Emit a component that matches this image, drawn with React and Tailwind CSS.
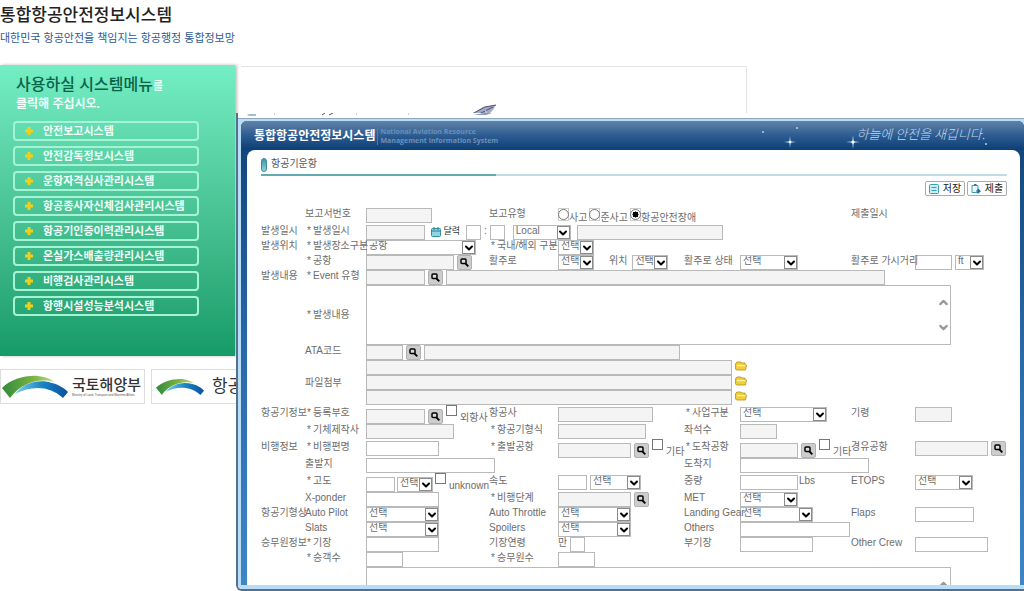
import React, { useState } from "react";
import { ChevronDown, ChevronUp } from "lucide-react";

const menus = [
  "안전보고시스템",
  "안전감독정보시스템",
  "운항자격심사관리시스템",
  "항공종사자신체검사관리시스템",
  "항공기인증이력관리시스템",
  "온실가스배출량관리시스템",
  "비행검사관리시스템",
  "항행시설성능분석시스템",
];

function Swoosh({ id, className }) {
  return (
    <svg viewBox="0 0 66 24" className={className} aria-hidden="true">
      <defs>
        <linearGradient id={id + "g"} x1="0" x2="1">
          <stop offset="0" stopColor="#2f8a3c" />
          <stop offset="0.6" stopColor="#7cb342" />
          <stop offset="1" stopColor="#b9d98a" />
        </linearGradient>
        <linearGradient id={id + "b"} x1="0" x2="1">
          <stop offset="0" stopColor="#7fd3ee" />
          <stop offset="0.5" stopColor="#1a86c4" />
          <stop offset="1" stopColor="#0b4f9e" />
        </linearGradient>
      </defs>
      <path d="M0 13 C9 4 24 0 36 1 C44 2 49 4 52 7 C38 3 20 7 8 23 Z" fill={`url(#${id}g)`} />
      <path d="M13 19 C22 7 38 4 50 8 C58 10 63 14 66 17 L61 23 C48 11 30 10 13 19 Z" fill={`url(#${id}b)`} />
    </svg>
  );
}

function Star({ className }) {
  return (
    <svg viewBox="0 0 14 14" className={className} aria-hidden="true">
      <path d="M7 0 L7.8 6.2 L14 7 L7.8 7.8 L7 14 L6.2 7.8 L0 7 L6.2 6.2 Z" fill="#a9d4f5" />
      <circle cx="7" cy="7" r="1.6" fill="#fff" />
    </svg>
  );
}

function FolderIcon() {
  return (
    <svg viewBox="0 0 12 10" className="h-2.5 w-3" aria-hidden="true">
      <path d="M1 2 L2 1 H6 L7 2 H10 V4 H11.5 L10.5 9 H1.5 L0.5 8 V3 Z" fill="#f2cf3a" stroke="#b8901a" strokeWidth="0.8" />
      <path d="M2 4.6 H10.5" stroke="#fff6b0" strokeWidth="1.2" />
    </svg>
  );
}

function Row({ tall, children }) {
  return (
    <div
      className={
        "grid grid-cols-[44fr_61fr_123fr_69fr_126fr_56fr_111fr_64fr_92fr] " +
        (tall ? "h-[17px]" : "h-[15px]")
      }
    >
      {children}
    </div>
  );
}

function Group({ children }) {
  return <div className="col-start-1 min-w-0 leading-3 whitespace-nowrap">{children}</div>;
}

function Label({ id, req, className = "", children }) {
  return (
    <label htmlFor={id} className={"relative z-10 flex min-w-0 leading-3 whitespace-nowrap " + className}>
      {req && <span className="w-2 shrink-0 text-center">*</span>}
      {children}
    </label>
  );
}

function Cell({ gap = "gap-[3px]", className = "", children }) {
  return <div className={"flex min-w-0 " + gap + " " + className}>{children}</div>;
}

function Field({ id, label, off, className = "" }) {
  return (
    <input
      id={id}
      aria-label={label}
      type="text"
      readOnly={off}
      className={
        "h-[15px] shrink-0 border border-[#b9b9b9] px-1 outline-none " +
        (off ? "bg-[#f4f4f4] " : "bg-white ") +
        className
      }
    />
  );
}

function Select({ id, label, value = "선택", className = "" }) {
  return (
    <span className={"relative flex h-[15px] shrink-0 border border-[#b9b9b9] bg-white " + className}>
      <select
        id={id}
        aria-label={label}
        className="h-2.5 w-full appearance-none bg-transparent pl-0.5 leading-[10px] outline-none"
      >
        <option>{value}</option>
      </select>
      <span className="pointer-events-none absolute inset-y-0 right-0 flex w-[13px] items-center justify-center border border-[#8a8a8a] bg-white">
        <ChevronDown size={12} strokeWidth={4} className="shrink-0 text-black" />
      </span>
    </span>
  );
}

function SearchButton({ label }) {
  return (
    <button
      type="button"
      aria-label={label}
      className="flex h-[15px] w-[15px] shrink-0 items-center justify-center rounded-xs border border-[#b0b0b0] bg-[#cdcdcd]"
    >
      <svg viewBox="0 0 9 9" className="h-[9px] w-[9px]" aria-hidden="true">
        <rect x="1" y="1" width="5" height="4.5" rx="1" fill="#ddd" stroke="#000" strokeWidth="1.5" />
        <path d="M5.5 5.5 L8.3 8.3" stroke="#000" strokeWidth="1.8" />
      </svg>
    </button>
  );
}

function Check({ children }) {
  return (
    <label className="flex shrink-0 items-end gap-[3px] self-stretch leading-3">
      <input type="checkbox" className="-mt-0.5 h-[11px] w-[11px] appearance-none self-start border border-[#777] bg-white checked:bg-gray-500" />
      {children}
    </label>
  );
}

function Radio({ value, current, onChange }) {
  return (
    <label className="flex items-end leading-3">
      <span className="flex h-[13px] w-[11px] items-center justify-center self-start border border-[#ccc]">
        <input
          type="radio"
          name="reportType"
          value={value}
          checked={current === value}
          onChange={() => onChange(value)}
          className="h-[11px] w-[11px] shrink-0 appearance-none rounded-full border border-[#777] bg-white checked:bg-[radial-gradient(circle,#000_45%,transparent_50%)]"
        />
      </span>
      {value}
    </label>
  );
}

function ReportForm() {
  const [type, setType] = useState("항공안전장애");

  return (
    <form className="mt-3 text-[10px] text-[#6c6c6c]">
      <Row tall>
        <Label id="reportNo" className="col-start-2">보고서번호</Label>
        <Cell><Field id="reportNo" off className="w-[66px]" /></Cell>
        <div className="leading-3">보고유형</div>
        <Cell gap="gap-0.5" className="col-span-3 h-4">
          {["사고", "준사고", "항공안전장애"].map((t) => (
            <Radio key={t} value={t} current={type} onChange={setType} />
          ))}
        </Cell>
        <div className="col-start-8 leading-3">제출일시</div>
      </Row>
      <Row>
        <Group>발생일시</Group>
        <Label id="date" req>발생일시</Label>
        <Cell gap="gap-1.5" className="col-span-7">
          <Field id="date" off className="w-[59px]" />
          <button type="button" className="flex h-[13px] w-[29px] shrink-0 items-center justify-between text-[9px] whitespace-nowrap text-[#333]">
            <svg viewBox="0 0 10 10" className="h-2.5 w-2.5 shrink-0" aria-hidden="true">
              <rect x="0.5" y="1.5" width="9" height="8" rx="1" fill="#8fd6e0" stroke="#2f8ea0" />
              <path d="M1 4 H9 M3 0 V3 M7 0 V3" stroke="#2f7f92" />
            </svg>
            달력
          </button>
          <div className="flex gap-[3px] leading-3">
            <Field label="시" className="w-[15px]" />
            :
            <Field label="분" className="w-[15px]" />
          </div>
          <Select label="시간대" value="Local" className="ml-0.5 w-[58px]" />
          <Field label="표준시" off className="w-[146px]" />
        </Cell>
      </Row>
      <Row>
        <Group>발생위치</Group>
        <Label id="place" req>발생장소구분</Label>
        <Cell><Select id="place" value="공항" className="w-[110px]" /></Cell>
        <Label id="domestic" req>국내/해외 구분</Label>
        <Cell><Select id="domestic" className="w-9" /></Cell>
      </Row>
      <Row>
        <Label id="airport" req className="col-start-2">공항</Label>
        <Cell>
          <Field id="airport" off className="w-[88px]" />
          <SearchButton label="공항 검색" />
        </Cell>
        <Label id="runway">활주로</Label>
        <Cell>
          <Select id="runway" className="w-9" />
          <Label id="position" className="ml-3">위치</Label>
          <Select id="position" className="ml-0.5 w-9" />
        </Cell>
        <Label id="runwayState">활주로 상태</Label>
        <Cell><Select id="runwayState" className="w-[58px]" /></Cell>
        <Label id="visibility">활주로 가시거리</Label>
        <Cell>
          <Field id="visibility" className="w-[37px]" />
          <Select label="거리 단위" value="ft" className="w-[29px]" />
        </Cell>
      </Row>
      <Row>
        <Group>발생내용</Group>
        <Label id="event" req>Event 유형</Label>
        <Cell className="col-span-7">
          <Field id="event" off className="w-[59px]" />
          <SearchButton label="Event 검색" />
          <Field label="Event 유형명" off className="w-[439px]" />
        </Cell>
      </Row>
      <div className="grid grid-cols-[44fr_61fr_585fr_56fr]">
        <Label id="content" req className="col-start-2 self-center">발생내용</Label>
        <div className="flex border border-[#b9b9b9]">
          <textarea id="content" className="h-[58px] flex-1 resize-none p-1 outline-none" />
          <div className="flex flex-col justify-between py-2.5 text-[#999]">
            <ChevronUp size={13} strokeWidth={4} />
            <ChevronDown size={13} strokeWidth={4} />
          </div>
        </div>
      </div>
      <Row>
        <Label id="ata" className="col-start-2">ATA코드</Label>
        <Cell className="col-span-7">
          <Field id="ata" off className="w-[37px]" />
          <SearchButton label="ATA 검색" />
          <Field label="ATA 코드명" off className="w-[256px]" />
        </Cell>
      </Row>
      <div className="grid grid-cols-[44fr_61fr_641fr]">
        <Label id="file1" className="col-start-2 self-center">파일첨부</Label>
        <div>
          {[1, 2, 3].map((n) => (
            <div key={n} className="flex items-start gap-[3px]">
              <Field id={"file" + n} label={n > 1 ? "파일첨부 " + n : undefined} off className="w-[366px]" />
              <button type="button" aria-label="파일 찾기" className="pt-px"><FolderIcon /></button>
            </div>
          ))}
        </div>
      </div>

      <div className="mt-0.5">
        <Row tall>
          <Group>항공기정보</Group>
          <Label id="regNo" req>등록부호</Label>
          <Cell className="items-end">
            <Field id="regNo" off className="w-[59px]" />
            <SearchButton label="등록부호 검색" />
            <Check>외항사</Check>
          </Cell>
          <Label id="airline">항공사</Label>
          <Cell><Field id="airline" off className="w-[95px]" /></Cell>
          <Label id="business" req>사업구분</Label>
          <Cell><Select id="business" className="w-[87px]" /></Cell>
          <Label id="age">기령</Label>
          <Cell><Field id="age" off className="w-[37px]" /></Cell>
        </Row>
        <Row tall>
          <Label id="maker" req className="col-start-2">기체제작사</Label>
          <Cell><Field id="maker" off className="w-[88px]" /></Cell>
          <Label id="model" req>항공기형식</Label>
          <Cell><Field id="model" off className="w-[88px]" /></Cell>
          <Label id="seats">좌석수</Label>
          <Cell><Field id="seats" off className="w-[37px]" /></Cell>
        </Row>
        <Row tall>
          <Group>비행정보</Group>
          <Label id="flight" req>비행편명</Label>
          <Cell><Field id="flight" className="w-[73px]" /></Cell>
          <Label id="dep" req>출발공항</Label>
          <Cell className="items-end">
            <Field id="dep" off className="w-[73px]" />
            <SearchButton label="출발공항 검색" />
            <Check>기타</Check>
          </Cell>
          <Label id="arr" req>도착공항</Label>
          <Cell className="items-end">
            <Field id="arr" off className="w-[58px]" />
            <SearchButton label="도착공항 검색" />
            <Check>기타</Check>
          </Cell>
          <Label id="via">경유공항</Label>
          <Cell>
            <Field id="via" off className="w-[73px]" />
            <SearchButton label="경유공항 검색" />
          </Cell>
        </Row>
        <Row tall>
          <Label id="from" className="col-start-2">출발지</Label>
          <Cell className="col-span-3"><Field id="from" className="w-[129px]" /></Cell>
          <Label id="to">도착지</Label>
          <Cell className="col-span-3"><Field id="to" className="w-[129px]" /></Cell>
        </Row>
        <Row tall>
          <Label id="altitude" req className="col-start-2">고도</Label>
          <Cell gap="gap-0.5" className="items-end">
            <Field id="altitude" className="w-[29px]" />
            <Select label="고도 단위" className="w-9" />
            <Check>unknown</Check>
          </Cell>
          <Label id="speed">속도</Label>
          <Cell>
            <Field id="speed" className="w-[29px]" />
            <Select label="속도 단위" className="w-[51px]" />
          </Cell>
          <Label id="weight">중량</Label>
          <Cell gap="gap-px">
            <Field id="weight" className="w-[58px]" />
            <span className="leading-3">Lbs</span>
          </Cell>
          <Label id="etops">ETOPS</Label>
          <Cell><Select id="etops" className="w-[58px]" /></Cell>
        </Row>
        <Row>
          <Label id="xponder" className="col-start-2">X-ponder</Label>
          <Cell><Field id="xponder" className="w-[73px]" /></Cell>
          <Label id="phase" req>비행단계</Label>
          <Cell>
            <Field id="phase" off className="w-[73px]" />
            <SearchButton label="비행단계 검색" />
          </Cell>
          <Label id="met">MET</Label>
          <Cell><Select id="met" className="w-[58px]" /></Cell>
        </Row>
        <Row>
          <Group>항공기형상</Group>
          <Label id="autoPilot">Auto Pilot</Label>
          <Cell><Select id="autoPilot" className="w-[73px]" /></Cell>
          <Label id="throttle">Auto Throttle</Label>
          <Cell><Select id="throttle" className="w-[73px]" /></Cell>
          <Label id="gear">Landing Gear</Label>
          <Cell><Select id="gear" className="w-[73px]" /></Cell>
          <Label id="flaps">Flaps</Label>
          <Cell><Field id="flaps" className="w-[59px]" /></Cell>
        </Row>
        <Row>
          <Label id="slats" className="col-start-2">Slats</Label>
          <Cell><Select id="slats" className="w-[73px]" /></Cell>
          <Label id="spoilers">Spoilers</Label>
          <Cell><Select id="spoilers" className="w-[73px]" /></Cell>
          <Label id="others">Others</Label>
          <Cell><Field id="others" className="w-[110px]" /></Cell>
        </Row>
        <Row>
          <Group>승무원정보</Group>
          <Label id="captain" req>기장</Label>
          <Cell><Field id="captain" className="w-[73px]" /></Cell>
          <Label id="captainAge">기장연령</Label>
          <Cell>
            <span className="leading-3">만</span>
            <Field id="captainAge" className="w-[15px]" />
          </Cell>
          <Label id="copilot">부기장</Label>
          <Cell><Field id="copilot" className="w-[73px]" /></Cell>
          <Label id="crew">Other Crew</Label>
          <Cell><Field id="crew" className="w-[73px]" /></Cell>
        </Row>
        <Row>
          <Label id="passengers" req className="col-start-2">승객수</Label>
          <Cell><Field id="passengers" className="w-[37px]" /></Cell>
          <Label id="crewCount" req>승무원수</Label>
          <Cell><Field id="crewCount" className="w-[37px]" /></Cell>
        </Row>
        <div className="grid grid-cols-[44fr_61fr_585fr_56fr]">
          <div className="col-start-3 flex border border-[#b9b9b9]">
            <textarea aria-label="비고" className="h-[58px] flex-1 resize-none p-1 outline-none" />
            <ChevronUp size={13} strokeWidth={4} className="mt-2.5 text-[#999]" />
          </div>
        </div>
      </div>
    </form>
  );
}

function ReportWindow() {
  return (
    <section className="absolute top-[113px] right-0 bottom-0 left-[236px] flex flex-col overflow-hidden rounded-bl-md border-b-2 border-l-2 border-[#55708c] bg-white">
      <svg viewBox="0 0 262 5" className="h-[5px] w-[262px] shrink-0" aria-hidden="true">
        <path d="M9 2 L13 1 L11 3 Z" fill="#7fae5a" />
        <path d="M12 2 H18" stroke="#3f7fb5" />
        <path d="M84 2 L87 0 M91 2 L95 0" stroke="#555" />
        <path d="M36 1 H37 M118 1 H119 M170 1 H171" stroke="#999" />
        <path d="M235 2 L246 0 H254 L248 2 Z" fill="#8d97b8" />
      </svg>
      <div className="flex min-h-0 flex-1 flex-col border-t border-[#8fa6bf] bg-[#b8ddf6] pt-0.5 pb-1 pl-[3px]">
        <div className="flex min-h-0 flex-1 flex-col overflow-hidden rounded-t-md bg-linear-to-b from-[#0f4377] via-[#2a69a8] to-[#3f86c6]">
          <header className="flex h-[29px] shrink-0 items-center bg-linear-to-b from-[#6283a6] via-[#2c5c91] to-[#0b3f74] pl-[13px]">
            <h2 className="text-xs font-bold whitespace-nowrap text-white">통합항공안전정보시스템</h2>
            <p className="ml-0.5 border-l border-[#56799f] pl-0.5 font-['Open_Sans'] text-[7px] leading-[9px] font-bold whitespace-nowrap text-[#6a90bc]">
              National Aviation Resource
              <br />
              Management Information System
            </p>
            <div className="ml-auto flex items-center pr-[37px]">
              <i className="mr-5 mb-2 h-0.5 w-0.5 rounded-full bg-[#a9d4f5]" />
              <Star className="mt-3 h-3 w-3" />
              <i className="mb-4 h-0.5 w-0.5 rounded-full bg-[#a9d4f5]" />
              <Star className="mt-3 ml-12 h-3.5 w-3.5" />
              <em className="mb-1 -ml-1 font-['Noto_Sans_CJK_KR'] text-[13px] font-light text-[#c3d8ee]">
                하늘에 안전을 새깁니다.
              </em>
              <i className="mt-4 h-0.5 w-0.5 rounded-full bg-[#a9d4f5]" />
            </div>
          </header>
          <div className="mr-1 ml-1.5 min-h-0 flex-1 overflow-hidden rounded-t-lg bg-white pt-2 pr-[13px] pl-3.5">
            <div className="flex h-4 items-start gap-1">
              <i className="h-3.5 w-1.5 rounded-full border border-[#3b8c9e] bg-linear-to-b from-[#3c93a8] to-[#8fd3dd]" />
              <h3 className="text-[10px] leading-3 text-[#555]">항공기운항</h3>
            </div>
            <div className="flex h-0.5 bg-[#c0dde4]">
              <div className="w-[235px] bg-[#62aab2]" />
            </div>
            <div className="mt-[5px] flex justify-end gap-0.5 text-[10px] text-[#222]">
              <button type="button" className="flex h-[15px] w-10 items-center justify-center gap-1 rounded-xs border border-[#aaa] bg-white">
                <svg viewBox="0 0 10 10" className="h-2.5 w-2.5" aria-hidden="true">
                  <rect x="0.5" y="0.5" width="9" height="9" rx="1" fill="#c9eef2" stroke="#3a9fb5" />
                  <path d="M2.5 3.5 H7.5 M2.5 6.5 H7.5" stroke="#3a9fb5" />
                </svg>
                저장
              </button>
              <button type="button" className="flex h-[15px] w-10 items-center justify-center gap-1 rounded-xs border border-[#aaa] bg-white">
                <svg viewBox="0 0 10 10" className="h-2.5 w-2.5" aria-hidden="true">
                  <path d="M1 1.5 H7 V8.5 H1 Z" fill="#e4f6fa" stroke="#3a9fb5" />
                  <path d="M3 0.8 H5.5" stroke="#2b6f9c" strokeWidth="1.4" />
                  <path d="M5 7 H9 M7 5 L9.4 7 L7 9.4 Z" fill="#2d5f9e" stroke="#2d5f9e" />
                </svg>
                제출
              </button>
            </div>
            <ReportForm />
          </div>
        </div>
      </div>
    </section>
  );
}

export default function App() {
  return (
    <div className="relative h-screen overflow-hidden bg-white font-['Liberation_Sans','Noto_Sans_CJK_KR',sans-serif]">
      <header className="h-[65px] pt-1.5">
        <h1 className="text-[17px] leading-5 font-medium text-[#222]">통합항공안전정보시스템</h1>
        <p className="mt-1 text-[11px] leading-4 text-[#2d5a94]">
          대한민국 항공안전을 책임지는 항공행정 통합정보망
        </p>
      </header>

      <div className="flex gap-1.5">
        <nav className="h-[291px] w-[235px] shrink-0 bg-linear-to-b from-[#74eec4] to-[#149b68] pt-2.5 pl-[13px] shadow-[2px_0_3px_#bbb]">
          <p className="pl-[3px] text-base leading-5 font-medium text-[#08644a]">
            사용하실 시스템메뉴<span className="text-[11px] font-bold text-[#e8fff6]">를</span>
          </p>
          <p className="pl-[3px] text-xs leading-4 font-bold text-[#f0fff9]">클릭해 주십시오.</p>
          <ul className="mt-[9px] flex w-[186px] flex-col gap-[5px]">
            {menus.map((menu) => (
              <li key={menu}>
                <a href="#" className="flex h-5 items-center gap-2.5 rounded-sm border-2 border-[#a5f3d6] pl-2.5 text-[11px] font-bold whitespace-nowrap text-[#f0fff9]">
                  <svg viewBox="0 0 8 8" className="h-2 w-2" aria-hidden="true">
                    <path d="M4 0 V8 M0 4 H8" stroke="#f0cf1c" strokeWidth="3" />
                  </svg>
                  {menu}
                </a>
              </li>
            ))}
          </ul>
        </nav>
        <div className="mt-px h-20 w-[506px] border-t border-r border-[#e4e4e4] pt-[37px] pl-[230px]">
          <svg viewBox="0 0 26 14" className="h-3.5 w-[26px]" aria-hidden="true">
            <path d="M1 10 L12 3 L25 1 L22 6 L17 11 H3 Z" fill="#a3abc6" />
            <path d="M1 10 L14 3 L25 1 M8 10 L22 3" stroke="#4a5278" fill="none" />
            <path d="M14 6 L17 11" stroke="#c9cfe2" />
          </svg>
        </div>
      </div>

      <footer className="mt-[13px] flex gap-1.5">
        <a href="#" className="flex h-[35px] w-[145px] shrink-0 items-center gap-1 border border-[#ddd] pl-px">
          <Swoosh id="a" className="h-6 w-[66px]" />
          <span className="text-[15px] leading-4 font-medium whitespace-nowrap text-[#333]">
            국토해양부
            <span className="block text-[3px] leading-1 text-[#555]">
              Ministry of Land, Transport and Maritime Affairs
            </span>
          </span>
        </a>
        <a href="#" className="flex h-[35px] w-[145px] shrink-0 items-center gap-2 border border-[#ddd] pl-1">
          <Swoosh id="b" className="h-[18px] w-12" />
          <span className="text-[17px] text-[#333]">항공</span>
        </a>
      </footer>

      <ReportWindow />
    </div>
  );
}
